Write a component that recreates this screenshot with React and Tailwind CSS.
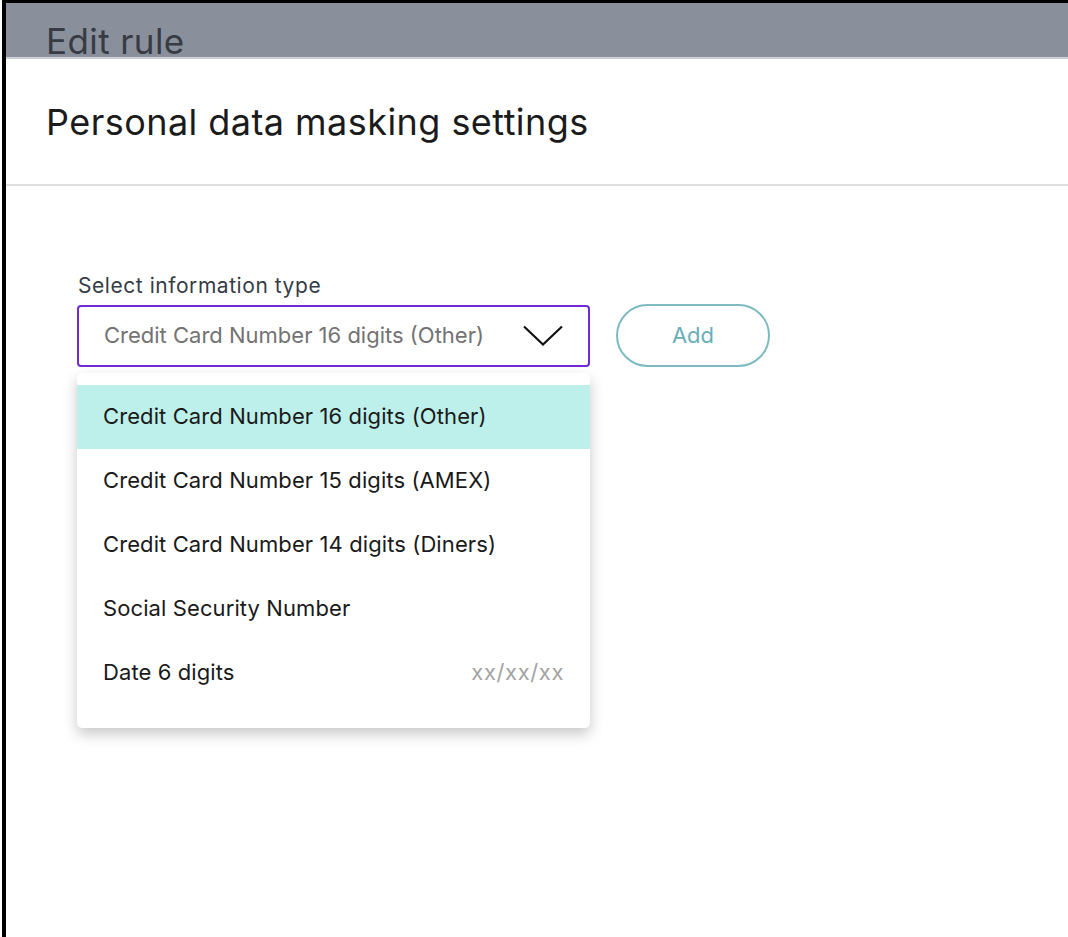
const options = [
  { label: "Credit Card Number 16 digits (Other)", active: true },
  { label: "Credit Card Number 15 digits (AMEX)" },
  { label: "Credit Card Number 14 digits (Diners)" },
  { label: "Social Security Number" },
  { label: "Date 6 digits", hint: "xx/xx/xx" },
]

export default function App() {
  return (
    <div
      className="w-[1068px] h-[937px] bg-white pl-[2px] overflow-hidden"
      style={{ fontFamily: "Inter, 'Noto Sans', sans-serif" }}
    >
      <div className="h-full border-l-4 border-t-[3px] border-black flex flex-col">
        {/* modal header behind the sheet */}
        <div className="h-[54px] bg-[#8a909b] pl-[40px] flex items-end">
          <span className="text-[35px] leading-[36px] text-[#363b44] tracking-[0.4px] translate-y-[2px]">Edit rule</span>
        </div>
        <div className="h-[2px] bg-[#cdd0d5]"></div>

        <div className="h-[127px] flex items-center pl-[40px] border-b-2 border-[#dedede]">
          <h1 className="text-[36px] text-[#1b1b1b] tracking-[0.45px]">Personal data masking settings</h1>
        </div>

        <div className="pl-[71px] pt-[86px]">
          <label className="block text-[21px] leading-[28px] text-[#363c46] tracking-[0.55px] pl-[1px] mb-[4px]">
            Select information type
          </label>
          <div className="flex items-center gap-[26px]">
            <div className="relative">
              <div className="w-[513px] h-[62px] border-2 border-[#6f2bd6] rounded-[4px] flex items-center justify-between pl-[25px] pr-[25px]">
                <span className="text-[22px] text-[#737373]">Credit Card Number 16 digits (Other)</span>
                <svg width="40" height="21" viewBox="0 0 40 21" fill="none">
                  <path d="M1 1.5 L20 19.5 L39 1.5" stroke="#111" strokeWidth="2.2" />
                </svg>
              </div>

              {/* open dropdown */}
              <div className="absolute left-0 top-[68px] w-[513px] bg-white rounded-[5px] shadow-[0_6px_14px_rgba(0,0,0,0.22)] pt-[12px] pb-[23px] z-10">
                {options.map((o) => (
                  <div
                    key={o.label}
                    className={
                      "h-[64px] flex items-center justify-between pl-[26px] pr-[26px] " +
                      (o.active ? "bg-[#bdf0ea]" : "")
                    }
                  >
                    <span className="text-[22px] text-[#1a1a1a] tracking-[0.1px]">{o.label}</span>
                    {o.hint && <span className="text-[22px] text-[#a3a3a3] tracking-[0.6px]">{o.hint}</span>}
                  </div>
                ))}
              </div>
            </div>

            <button className="w-[154px] h-[63px] rounded-full border-2 border-[#7dbac2] text-[22px] text-[#6aaeb8]">
              Add
            </button>
          </div>
        </div>
      </div>
    </div>
  )
}
